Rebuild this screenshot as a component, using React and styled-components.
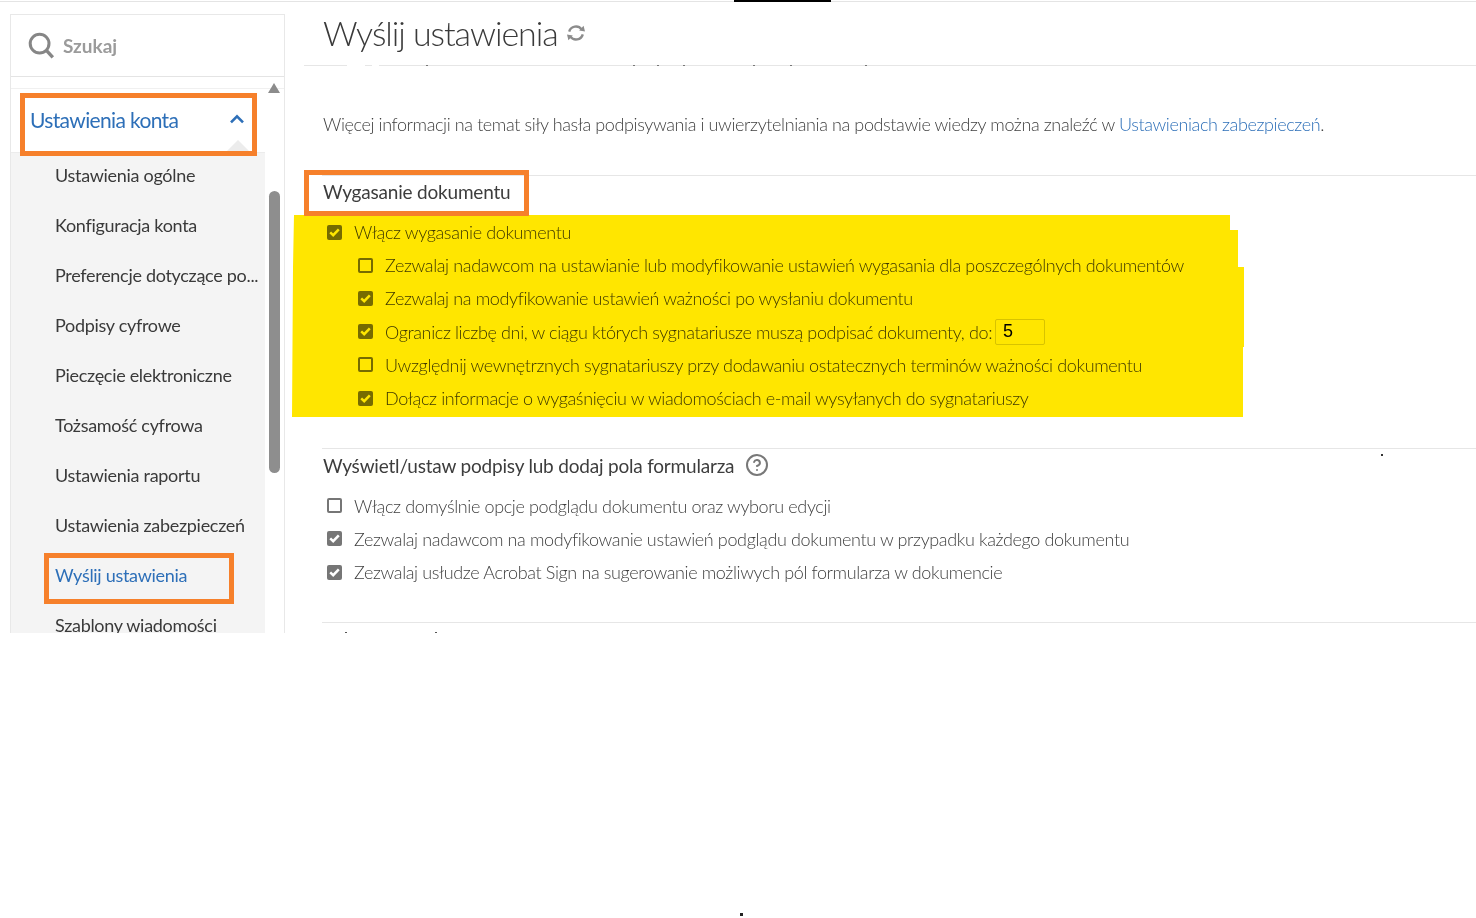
import { createGlobalStyle } from "styled-components";
import styled from "styled-components";
import { CircleHelp } from "lucide-react";

const GlobalStyle = createGlobalStyle`
  html, body {
    margin: 0;
    background: #fff;
  }
  *, *::before, *::after {
    box-sizing: border-box;
  }
  body {
    font-family: Lato, "Open Sans", "Liberation Sans", sans-serif;
    color: #4b4b4b;
  }
`;

const navItems = [
  "Ustawienia ogólne",
  "Konfiguracja konta",
  "Preferencje dotyczące po...",
  "Podpisy cyfrowe",
  "Pieczęcie elektroniczne",
  "Tożsamość cyfrowa",
  "Ustawienia raportu",
  "Ustawienia zabezpieczeń",
  "Wyślij ustawienia",
  "Szablony wiadomości",
];

const expiryRows = [
  { text: "Zezwalaj nadawcom na ustawianie lub modyfikowanie ustawień wygasania dla poszczególnych dokumentów" },
  { text: "Zezwalaj na modyfikowanie ustawień ważności po wysłaniu dokumentu", checked: true },
  { text: "Ogranicz liczbę dni, w ciągu których sygnatariusze muszą podpisać dokumenty, do:", checked: true, days: "5" },
  { text: "Uwzględnij wewnętrznych sygnatariuszy przy dodawaniu ostatecznych terminów ważności dokumentu" },
  { text: "Dołącz informacje o wygaśnięciu w wiadomościach e-mail wysyłanych do sygnatariuszy", checked: true },
];

const previewRows = [
  { text: "Włącz domyślnie opcje podglądu dokumentu oraz wyboru edycji" },
  { text: "Zezwalaj nadawcom na modyfikowanie ustawień podglądu dokumentu w przypadku każdego dokumentu", checked: true },
  { text: "Zezwalaj usłudze Acrobat Sign na sugerowanie możliwych pól formularza w dokumencie", checked: true },
];

// stray marks left over in the screenshot: clipped descenders and dust
const marks = [
  [426, 65, 2, 1, "#777"],
  [633, 65, 2, 1, "#777"],
  [657, 65, 2, 1, "#777"],
  [683, 65, 2, 1, "#777"],
  [753, 65, 2, 1, "#777"],
  [790, 65, 2, 1, "#777"],
  [865, 65, 2, 1, "#777"],
  [345, 632, 2, 1, "#555"],
  [435, 632, 2, 1, "#555"],
  [1381, 454, 2, 2, "#333"],
  [740, 913, 3, 3, "#222"],
];

const Check = ({ checked }) => (
  <CheckBox $checked={checked}>
    {checked && (
      <svg width="11" height="9" viewBox="0 0 11 9" fill="none">
        <path d="M1.2 4.4 4.2 7.2 9.8 1.4" stroke="#fff" strokeWidth="2.5" />
      </svg>
    )}
  </CheckBox>
);

const Option = ({ text, checked, days, nested }) => (
  <Row $nested={nested}>
    <Check checked={checked} />
    <span>{text}</span>
    {days && <DaysInput defaultValue={days} />}
  </Row>
);

const App = () => {
  return (
    <Page>
      <GlobalStyle />
      <TopRule />
      <Shell>
        <Sidebar>
          <SearchBox>
            <svg width="28" height="28" viewBox="0 0 28 28" fill="none">
              <circle cx="11.6" cy="11.6" r="9.4" stroke="#868686" strokeWidth="3" />
              <path d="M18.4 18.4 24.8 25.4" stroke="#868686" strokeWidth="3.4" />
            </svg>
            <span>Szukaj</span>
          </SearchBox>
          <NavArea>
            <Nav>
              <NavHeader>
                <span>Ustawienia konta</span>
                <svg width="16" height="10" viewBox="0 0 16 10" fill="none">
                  <path d="M2 8.4 8 2.4 14 8.4" stroke="#2d6fb8" strokeWidth="2.6" />
                </svg>
              </NavHeader>
              <NavList>
                {navItems.map((item) => (
                  <NavItem key={item} $active={item === "Wyślij ustawienia"}>
                    {item}
                  </NavItem>
                ))}
              </NavList>
            </Nav>
            <ScrollTrack>
              <ScrollArrow />
              <ScrollThumb />
            </ScrollTrack>
          </NavArea>
        </Sidebar>
        <Main>
          <TitleBar>
            <Title>Wyślij ustawienia</Title>
            <svg width="20" height="18" viewBox="0 0 20 18" fill="none">
              <path d="M3.2 7.6A7 7 0 0 1 15.6 5.4" stroke="#8c8c8c" strokeWidth="2.4" />
              <path d="M13.2 6.4 19 7.4 17.6 1.8Z" fill="#8c8c8c" />
              <path d="M16.8 10.4A7 7 0 0 1 4.4 12.6" stroke="#8c8c8c" strokeWidth="2.4" />
              <path d="M6.8 11.6 1 10.6 2.4 16.2Z" fill="#8c8c8c" />
            </svg>
          </TitleBar>
          <Intro>
            Więcej informacji na temat siły hasła podpisywania i uwierzytelniania na podstawie wiedzy można znaleźć w{" "}
            <IntroLink href="#">Ustawieniach zabezpieczeń</IntroLink>.
          </Intro>
          <Section $bottom={33.5}>
            <FramedHeading>Wygasanie dokumentu</FramedHeading>
            <Highlighted>
              <Option text="Włącz wygasanie dokumentu" checked />
              {expiryRows.map((row) => (
                <Option key={row.text} nested {...row} />
              ))}
            </Highlighted>
          </Section>
          <Section $bottom={33}>
            <Heading>
              Wyświetl/ustaw podpisy lub dodaj pola formularza
              <CircleHelp size={24} strokeWidth={2} color="#787878" />
            </Heading>
            <RowList>
              {previewRows.map((row) => (
                <Option key={row.text} {...row} />
              ))}
            </RowList>
          </Section>
          <Section $bottom={0} />
        </Main>
      </Shell>
      <Marks width="1476" height="918" viewBox="0 0 1476 918">
        <rect x="347" y="64" width="18" height="3" fill="#fff" />
        <rect x="372" y="64" width="7" height="3" fill="#fff" />
        {marks.map(([x, y, w, h, fill]) => (
          <rect key={`${x}-${y}`} x={x} y={y} width={w} height={h} fill={fill} />
        ))}
      </Marks>
    </Page>
  );
};

const Page = styled.div`
  position: relative;
  width: 100%;
  height: 918px;
  overflow: hidden;
  background: #fff;
`;

const Marks = styled.svg`
  position: absolute;
  left: 0;
  top: 0;
  pointer-events: none;
`;

const TopRule = styled.div`
  position: relative;
  height: 2px;
  border-bottom: 1px solid #e4e4e4;
  &::after {
    content: "";
    position: absolute;
    left: 734px;
    top: 0;
    width: 97px;
    height: 2px;
    background: #000;
  }
`;

const Shell = styled.div`
  display: flex;
  height: 631px;
  overflow: hidden;
`;

const Sidebar = styled.aside`
  flex: none;
  width: 275px;
  margin: 12px 0 0 10px;
  border: 1px solid #e8e8e8;
  border-bottom: 0;
`;

const SearchBox = styled.div`
  display: flex;
  align-items: center;
  gap: 7px;
  height: 62px;
  padding-left: 17px;
  border-bottom: 1px solid #e4e4e4;
  color: #9b9b9b;
  font-size: 19px;
  font-weight: 700;
`;

const NavArea = styled.div`
  display: flex;
  margin-top: 11px;
  border-top: 1px solid #f0f0f0;
`;

const Nav = styled.nav`
  flex: none;
  width: 254px;
`;

const NavHeader = styled.div`
  position: relative;
  display: flex;
  align-items: center;
  justify-content: space-between;
  height: 63px;
  padding: 0 20px 3px 19px;
  color: #2d6fb8;
  font-size: 21px;
  letter-spacing: -0.65px;
  &::before {
    content: "";
    position: absolute;
    left: 9px;
    top: 4px;
    right: 8px;
    bottom: -4px;
    border: 5px solid #f6802b;
    z-index: 2;
  }
  &::after {
    content: "";
    position: absolute;
    right: 15px;
    bottom: 0;
    border: 12px solid transparent;
    border-top: 0;
    border-bottom-color: #ececec;
  }
`;

const NavList = styled.ul`
  margin: 0;
  padding: 0;
  list-style: none;
  background: #f4f4f4;
  border-top: 1px solid #ececec;
`;

const NavItem = styled.li`
  position: relative;
  height: 50px;
  padding-left: 44px;
  color: ${(p) => (p.$active ? "#2d6fb8" : "#3a3a3a")};
  font-size: 18px;
  letter-spacing: -0.3px;
  line-height: 44px;
  white-space: nowrap;
  ${(p) =>
    p.$active &&
    `
    &::after {
      content: "";
      position: absolute;
      left: 33px;
      top: 0;
      width: 190px;
      height: 51px;
      border: 5px solid #f6802b;
    }
  `}
`;

const ScrollTrack = styled.div`
  flex: none;
  width: 19px;
  padding: 0 4px;
`;

const ScrollArrow = styled.div`
  width: 0;
  margin: -6px 0 0 -1px;
  border: 6.5px solid transparent;
  border-top: 0;
  border-bottom: 10px solid #8c8c8c;
`;

const ScrollThumb = styled.div`
  width: 11px;
  height: 282px;
  margin-top: 98px;
  border-radius: 6px;
  background: #8e8e8e;
`;

const Main = styled.main`
  position: relative;
  flex: 1;
  min-width: 0;
  margin-left: 19px;
`;

const TitleBar = styled.header`
  display: flex;
  align-items: center;
  gap: 8px;
  height: 64px;
  padding: 0 0 2px 19px;
  border-bottom: 1px solid #e6e6e6;
`;

const Title = styled.h1`
  margin: 0;
  color: #3a3a3a;
  font-size: 34px;
  font-weight: 300;
  letter-spacing: -1.05px;
`;

const Intro = styled.p`
  margin: 0;
  padding: 45px 0 38px 19px;
  font-size: 18px;
  font-weight: 300;
  letter-spacing: -0.39px;
  line-height: 26px;
  color: #3f3f3f;
`;

const IntroLink = styled.a`
  color: #2d6fb8;
  text-decoration: none;
`;

const Section = styled.section`
  margin-left: 18px;
  padding: 0 0 ${(p) => p.$bottom}px 1px;
  border-top: 1px solid #e6e6e6;
`;

const Heading = styled.h2`
  display: flex;
  align-items: center;
  gap: 11px;
  height: 34px;
  margin: 0;
  padding-bottom: 2px;
  color: #3d3d3d;
  font-size: 19px;
  font-weight: 400;
  letter-spacing: -0.2px;
`;

const FramedHeading = styled(Heading)`
  position: relative;
  height: 32px;
  &::after {
    content: "";
    position: absolute;
    left: -19px;
    top: -6px;
    width: 225px;
    height: 46px;
    border: 5px solid #f6802b;
    z-index: 2;
  }
`;

const RowList = styled.div`
  margin-top: 6px;
`;

const Highlighted = styled(RowList)`
  position: relative;
  margin-top: 7.5px;
  &::after {
    content: "";
    position: absolute;
    left: -31px;
    top: -0.5px;
    width: 952px;
    height: 202px;
    background: #ffe600;
    mix-blend-mode: multiply;
    clip-path: polygon(
      2px 0, 938px 0, 938px 15px, 946px 15px, 946px 52px, 952px 52px,
      952px 132px, 951px 132px, 951px 202px, 0 202px, 1px 52px
    );
    pointer-events: none;
  }
`;

const Row = styled.label`
  display: flex;
  align-items: center;
  height: 33.2px;
  padding-left: ${(p) => (p.$nested ? "35px" : "4px")};
  font-size: 18px;
  font-weight: 300;
  letter-spacing: -0.37px;
  color: #3f3f3f;
  white-space: nowrap;
`;

const CheckBox = styled.span`
  flex: none;
  display: flex;
  align-items: center;
  justify-content: center;
  width: 15px;
  height: 15px;
  margin-right: 12px;
  border-radius: 2px;
  background: ${(p) => (p.$checked ? "#767676" : "#fff")};
  border: ${(p) => (p.$checked ? "0" : "2px solid #767676")};
`;

const DaysInput = styled.input`
  width: 50px;
  height: 26px;
  margin-left: 3px;
  padding: 0 7px;
  border: 1px solid #d8d8d8;
  border-radius: 2px;
  background: #fff;
  color: #000;
  font-family: "Liberation Sans", Arial, sans-serif;
  font-size: 18px;
  outline: none;
`;

export default App;
